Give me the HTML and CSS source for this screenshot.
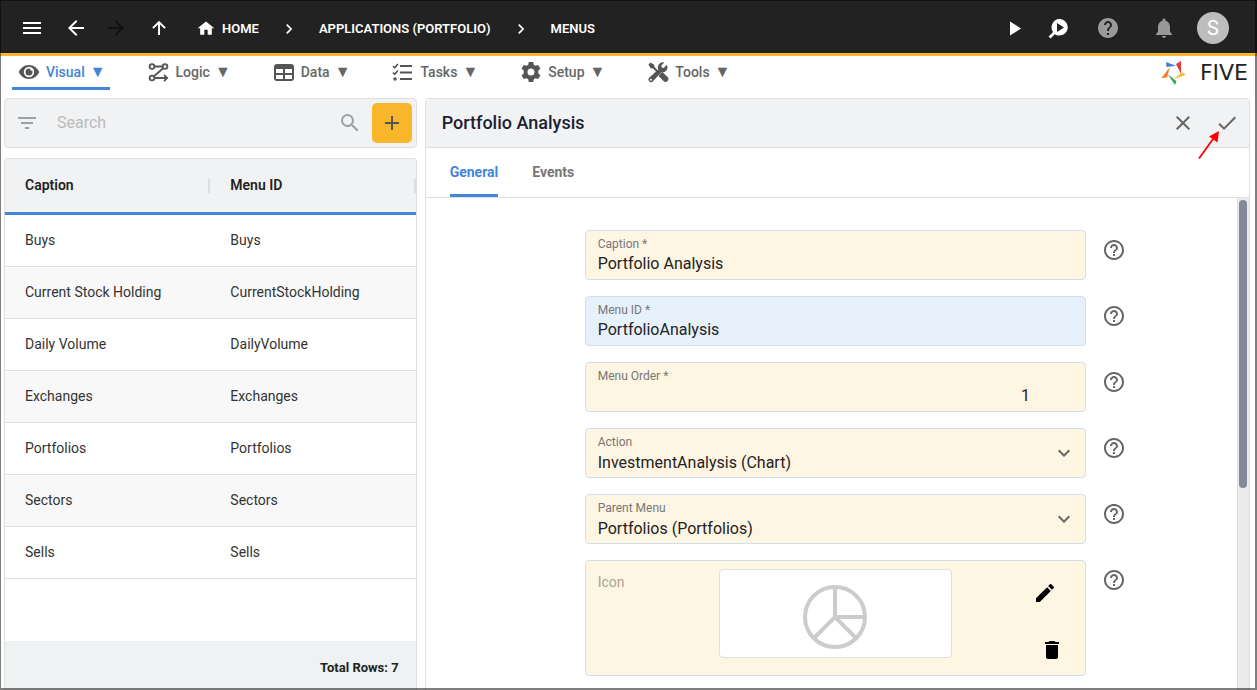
FILE: index.html
```html
<!DOCTYPE html>
<html lang="en">
<head>
<meta charset="utf-8">
<meta name="viewport" content="width=device-width, initial-scale=1">
<title>Five - Menus</title>
<link rel="stylesheet" href="styles.css">
</head>
<body>
<svg class="defs" aria-hidden="true">
  <symbol id="help" viewBox="0 0 24 24"><path d="M11 18h2v-2h-2v2zm1-16C6.48 2 2 6.48 2 12s4.480 10 10 10 10-4.480 10-10S17.520 2 12 2zm0 18c-4.410 0-8-3.590-8-8s3.590-8 8-8 8 3.590 8 8-3.590 8-8 8zm0-14c-2.210 0-4 1.790-4 4h2c0-1.100.9-2 2-2s2 .9 2 2c0 2-3 1.750-3 5h2c0-2.250 3-2.500 3-5 0-2.210-1.790-4-4-4z"/></symbol>
  <symbol id="chevron" viewBox="0 0 24 24"><path d="M10 6 8.590 7.410 13.170 12l-4.580 4.590L10 18l6-6z"/></symbol>
  <symbol id="expand" viewBox="0 0 24 24"><path d="M16.590 8.590 12 13.170 7.410 8.590 6 10l6 6 6-6z"/></symbol>
</svg>
<div class="app">
  <header class="topbar">
    <button class="icon-btn menu" aria-label="Menu"><svg viewBox="0 0 24 24"><path d="M3 18h18v-2H3zm0-5h18v-2H3zm0-7v2h18V6z"/></svg></button>
    <button class="icon-btn" aria-label="Back"><svg viewBox="0 0 24 24"><path d="M20 11H7.830l5.590-5.590L12 4l-8 8 8 8 1.410-1.410L7.830 13H20z"/></svg></button>
    <button class="icon-btn dim" aria-label="Forward" disabled><svg viewBox="0 0 24 24"><path d="m12 4-1.410 1.410L16.170 11H4v2h12.170l-5.580 5.590L12 20l8-8z"/></svg></button>
    <button class="icon-btn up" aria-label="Up"><svg viewBox="0 0 24 24"><path d="M11 19V8.400l-4.400 4.400L5.200 11.400 12 4.700l6.800 6.700-1.400 1.400L13 8.400V19z"/></svg></button>
    <nav class="crumbs" aria-label="Breadcrumb">
      <a class="crumb home" href="#"><svg viewBox="0 0 24 24"><path d="M10 19v-6h4v6h5v-8h3L12 3 2 11h3v8z"/></svg>HOME</a>
      <svg class="sep" aria-hidden="true"><use href="#chevron"/></svg>
      <a class="crumb" href="#">APPLICATIONS (PORTFOLIO)</a>
      <svg class="sep" aria-hidden="true"><use href="#chevron"/></svg>
      <a class="crumb" href="#">MENUS</a>
    </nav>
    <div class="tools">
      <button class="icon-btn" aria-label="Run"><svg viewBox="0 0 24 24"><path d="M8 5.500v14L19 12.500z"/></svg></button>
      <button class="icon-btn" aria-label="Inspect"><svg viewBox="0 0 24 24"><path fill-rule="evenodd" d="M13.500 3a8.300 8.300 0 1 1-4.700 15.200L4.500 22.500 2.600 20.600l4.500-4.500A8.300 8.300 0 0 1 13.500 3zM11 7v9l7-4.500z"/></svg></button>
      <button class="icon-btn soft ask" aria-label="Help"><svg viewBox="0 0 24 24"><path d="M12 2C6.480 2 2 6.480 2 12s4.480 10 10 10 10-4.480 10-10S17.520 2 12 2zm1 17h-2v-2h2v2zm2.070-7.750-.9.920C13.450 12.900 13 13.500 13 15h-2v-.5c0-1.100.450-2.100 1.170-2.830l1.240-1.260c.370-.360.590-.860.590-1.410 0-1.100-.9-2-2-2s-2 .9-2 2H8c0-2.210 1.790-4 4-4s4 1.790 4 4c0 .88-.360 1.680-.93 2.250z"/></svg></button>
      <button class="icon-btn soft bell" aria-label="Notifications"><svg viewBox="0 0 24 24"><path d="M12 22c1.100 0 2-.9 2-2h-4c0 1.100.9 2 2 2zm6-6v-5c0-3.070-1.630-5.640-4.500-6.320V4c0-.83-.67-1.500-1.500-1.500s-1.500.67-1.500 1.500v.68C7.640 5.360 6 7.920 6 11v5l-2 2v1h16v-1z"/></svg></button>
      <button class="avatar" aria-label="Account">S</button>
    </div>
  </header>

  <nav class="modules" aria-label="Modules">
    <button class="module active"><svg viewBox="0 0 24 24"><path fill-rule="evenodd" d="M12 5C7.500 5 3.500 7.800 1.800 12c1.700 4.200 5.700 7 10.200 7s8.500-2.800 10.200-7C20.500 7.800 16.500 5 12 5zm0 1.800a5.200 5.200 0 1 1 0 10.400 5.200 5.200 0 0 1 0-10.400zm0 1.700a3.500 3.500 0 1 0 3.500 3.500c0-.5-.1-1-.3-1.400a1.600 1.600 0 0 1-2-2A3.500 3.500 0 0 0 12 8.500z"/></svg>Visual <span>▼</span></button>
    <button class="module"><svg viewBox="0 0 24 24" fill="none" stroke="currentColor" stroke-width="1.800"><circle cx="5" cy="6.500" r="2.400"/><circle cx="18" cy="6.500" r="2.400"/><circle cx="5" cy="18" r="2.400"/><path d="M7.500 6.500h8M16.200 8.300 6.900 16.300M7.500 18h12M17 14.800l3.200 3.200-3.200 3.200"/></svg>Logic <span>▼</span></button>
    <button class="module"><svg viewBox="0 0 24 24"><path fill-rule="evenodd" d="M5 4h14q3 0 3 3v11q0 3-3 3H5q-3 0-3-3V7q0-3 3-3zm-1 5v4h7V9zm9 0v4h7V9zm-9 6v4h7v-4zm9 0v4h7v-4z"/></svg>Data <span>▼</span></button>
    <button class="module"><svg viewBox="0 0 24 24" fill="none" stroke="currentColor" stroke-width="2"><path d="M9 6h12M9 12.500h12M9 19h12"/><path stroke-width="1.600" d="m2 6 1.700 1.700 3.200-3.800M2 12.500l1.700 1.700 3.200-3.800"/><circle cx="4" cy="19" r=".8"/></svg>Tasks <span>▼</span></button>
    <button class="module"><svg viewBox="0 0 24 24"><path fill-rule="evenodd" d="M9.800 2h4.400l.6 2.800 1.700 1 2.700-.9 2.200 3.800-2.100 1.900v2.800l2.100 1.900-2.200 3.800-2.700-.9-1.700 1-.6 2.800H9.800l-.6-2.800-1.700-1-2.700.9-2.200-3.800 2.100-1.900v-2.800L2.600 8.700l2.200-3.800 2.700.9 1.700-1zM12 8.500a3.500 3.500 0 1 0 0 7 3.500 3.500 0 0 0 0-7z"/></svg>Setup <span>▼</span></button>
    <button class="module"><svg viewBox="0 0 24 24"><path d="m2.500 4.500 2-2 3.600 2.200.4 2.400 4.200 4.200-1.500 1.500L7 8.600l-2.400-.4z"/><path d="m14.700 13.200 2-1 4.800 4.900a2.800 2.800 0 0 1-4 4l-4.900-5z"/><path fill-rule="evenodd" d="M20.800 4.800 17.700 8l-2-.4-.4-2 3-3.200a5.200 5.200 0 0 0-6 7.200l-9.100 8.200a2.500 2.500 0 1 0 3.500 3.600l8.500-9a5.200 5.200 0 0 0 5.600-7.600zM5 18.700a1 1 0 1 1 0 2 1 1 0 0 1 0-2z"/></svg>Tools <span>▼</span></button>
    <div class="brand">
      <svg viewBox="0 0 25 24" aria-hidden="true"><path fill="#3f7fd6" d="M5 1l10 3.800L5.500 6z"/><path fill="#e23b3b" d="M20 0v13l-5-10z"/><path fill="#f9b92b" d="M20.500 11.500l4.500 2.300L13 18z"/><path fill="#36a853" d="M6.500 13l9 7.200L14 24z"/><path fill="#f58025" d="M9 6L6 16.500.3 17z"/></svg>
      <span>FIVE</span>
    </div>
  </nav>

  <main class="workspace">
    <section class="side">
      <div class="search">
        <button class="icon-btn tint" aria-label="Filter"><svg viewBox="0 0 24 24"><path d="M10 18h4v-2h-4zM3 6v2h18V6zm3 7h12v-2H6z"/></svg></button>
        <input type="search" aria-label="Search" placeholder="Search">
        <button class="icon-btn tint" aria-label="Search records"><svg viewBox="0 0 24 24"><path d="M15.500 14h-.79l-.28-.27A6.470 6.470 0 0 0 16 9.500 6.500 6.500 0 1 0 9.500 16c1.610 0 3.090-.59 4.230-1.570l.27.28v.79l5 4.990L20.490 19zm-6 0a4.500 4.500 0 1 1 0-9 4.500 4.500 0 0 1 0 9z"/></svg></button>
        <button class="add" aria-label="Add"><svg viewBox="0 0 24 24"><path d="M19 13h-6v6h-2v-6H5v-2h6V5h2v6h6z"/></svg></button>
      </div>
      <div class="list">
        <table>
          <thead><tr><th>Caption</th><th>Menu ID</th></tr></thead>
          <tbody>
            <tr><td>Buys</td><td>Buys</td></tr>
            <tr><td>Current Stock Holding</td><td>CurrentStockHolding</td></tr>
            <tr><td>Daily Volume</td><td>DailyVolume</td></tr>
            <tr><td>Exchanges</td><td>Exchanges</td></tr>
            <tr><td>Portfolios</td><td>Portfolios</td></tr>
            <tr><td>Sectors</td><td>Sectors</td></tr>
            <tr><td>Sells</td><td>Sells</td></tr>
          </tbody>
        </table>
        <div class="total">Total Rows: 7</div>
      </div>
    </section>

    <section class="detail">
      <div class="detail-head">
        <h1>Portfolio Analysis</h1>
        <button class="icon-btn" aria-label="Cancel"><svg viewBox="0 0 24 24"><path d="M19 6.410 17.590 5 12 10.590 6.410 5 5 6.410 10.590 12 5 17.590 6.410 19 12 13.410 17.590 19 19 17.590 13.410 12z"/></svg></button>
        <button class="icon-btn" aria-label="Save"><svg viewBox="0 0 24 24"><path d="M9 16.200 4.800 12l-1.400 1.400L9 19 21 7l-1.400-1.400z"/></svg></button>
        <svg class="pointer" viewBox="0 0 22 30" aria-hidden="true"><path d="M1 28.500 15 9" stroke="#f00" stroke-width="1.800"/><path fill="#f00" d="M21 1 19.500 12.500 11 6.500z"/></svg>
      </div>
      <div class="tabs" role="tablist">
        <button class="tab active" role="tab" aria-selected="true">General</button>
        <button class="tab" role="tab" aria-selected="false">Events</button>
      </div>
      <div class="body">
        <form class="form">
          <div class="row">
            <div class="field"><label for="caption">Caption *</label><input id="caption" type="text" value="Portfolio Analysis"></div>
            <button type="button" class="icon-btn hint" aria-label="About Caption"><svg><use href="#help"/></svg></button>
          </div>
          <div class="row">
            <div class="field focus"><label for="menu-id">Menu ID *</label><input id="menu-id" type="text" value="PortfolioAnalysis"></div>
            <button type="button" class="icon-btn hint" aria-label="About Menu ID"><svg><use href="#help"/></svg></button>
          </div>
          <div class="row">
            <div class="field"><label for="order">Menu Order *</label><input id="order" class="number" type="text" inputmode="numeric" value="1"></div>
            <button type="button" class="icon-btn hint" aria-label="About Menu Order"><svg><use href="#help"/></svg></button>
          </div>
          <div class="row">
            <div class="field"><label for="action">Action</label><select id="action"><option>InvestmentAnalysis (Chart)</option></select><svg class="arrow" aria-hidden="true"><use href="#expand"/></svg></div>
            <button type="button" class="icon-btn hint" aria-label="About Action"><svg><use href="#help"/></svg></button>
          </div>
          <div class="row">
            <div class="field"><label for="parent">Parent Menu</label><select id="parent"><option>Portfolios (Portfolios)</option></select><svg class="arrow" aria-hidden="true"><use href="#expand"/></svg></div>
            <button type="button" class="icon-btn hint" aria-label="About Parent Menu"><svg><use href="#help"/></svg></button>
          </div>
          <div class="row">
            <div class="field picture">
              <span class="caption">Icon</span>
              <div class="preview"><svg viewBox="0 0 64 64" fill="none" stroke="#ccc" stroke-width="4"><circle cx="32" cy="32" r="30"/><path d="M32 2v30h30M11 53l21-21 21 21"/></svg></div>
              <div class="actions">
                <button type="button" class="icon-btn edit" aria-label="Edit icon"><svg viewBox="0 0 24 24"><path d="M3 17.250V21h3.750L17.810 9.940l-3.750-3.750zM20.710 7.040a1 1 0 0 0 0-1.410l-2.340-2.340a1 1 0 0 0-1.410 0l-1.830 1.830 3.750 3.750z"/></svg></button>
                <button type="button" class="icon-btn" aria-label="Delete icon"><svg viewBox="0 0 24 24"><path d="M6 19c0 1.100.9 2 2 2h8c1.100 0 2-.9 2-2V7H6zM19 4h-3.500l-1-1h-5l-1 1H5v2h14z"/></svg></button>
              </div>
            </div>
            <button type="button" class="icon-btn hint" aria-label="About Icon"><svg><use href="#help"/></svg></button>
          </div>
        </form>
        <div class="scroll"><div class="thumb"></div></div>
      </div>
    </section>
  </main>
</div>
</body>
</html>
```
FILE: styles.css
```css
* { box-sizing: border-box; }
body {
  margin: 0;
  font: 14px/20px Roboto, "Liberation Sans", sans-serif;
  color: #333;
  background: #fff;
}
button, input, select { font: inherit; color: inherit; border: 0; margin: 0; padding: 0; background: none; outline: 0; }
svg { display: block; flex: none; }
svg:not([fill]) { fill: currentColor; }
.defs { position: absolute; width: 0; height: 0; }

.app { display: flex; flex-direction: column; height: 100vh; overflow: hidden; }
.app::after {
  content: "";
  position: fixed;
  inset: 0;
  border: solid rgba(0, 0, 0, .5);
  border-width: 1px 2px 2px 1px;
  pointer-events: none;
}
.icon-btn { display: flex; width: 24px; height: 24px; flex: none; }
.icon-btn svg { width: 24px; height: 24px; }

.topbar {
  display: flex;
  align-items: center;
  gap: 16px;
  height: 56px;
  flex: none;
  padding: 0 28px 0 20px;
  background: #222;
  border-bottom: 3px solid #f8b62b;
  color: #fff;
}
.topbar > .icon-btn { margin-top: 3px; }
.topbar .menu { margin-right: 4px; }
.topbar .dim { color: #111; }
.topbar .up { margin-left: 3px; }
.crumbs { display: flex; align-items: center; margin: 4px 0 0 9px; font-size: 13px; font-weight: 600; }
.crumb { display: flex; align-items: center; gap: 6px; color: #fff; text-decoration: none; }
.crumb svg { width: 20px; height: 20px; }
.sep { width: 20px; height: 20px; margin: 0 20px; }
.tools { display: flex; align-items: center; gap: 20px; margin: 3px 0 0 auto; }
.soft { color: #999; }
.tools .ask { margin-left: 6px; }
.tools .bell { margin-left: 12px; margin-right: 1px; }
.avatar { width: 32px; height: 32px; border-radius: 50%; background: #bdbdbd; font-size: 20px; }

.modules { display: flex; align-items: flex-start; gap: 32px; height: 42px; flex: none; padding: 0 9px 0 12px; color: #555; }
.module { display: flex; align-items: center; gap: 5px; height: 34px; padding: 0 4px 0 5px; border-bottom: 3px solid transparent; font-weight: 500; color: #666; }
.module span { font-size: 16px; }
.module svg { width: 24px; height: 24px; color: #555; }
.module.active { color: #4285db; border-color: #4285db; }
.brand { display: flex; align-items: center; gap: 14px; height: 34px; margin-left: auto; font: 22px/24px "DejaVu Sans", sans-serif; color: #222; }
.brand svg { width: 25px; height: 24px; }

.workspace { display: grid; grid-template-columns: minmax(0, 1fr) minmax(0, 2fr); gap: 8px; flex: 1; min-height: 0; padding: 0 7px 0 4px; }
.side { display: flex; flex-direction: column; gap: 10px; min-height: 0; }
.search { display: flex; align-items: center; height: 50px; padding: 0 4px 0 10px; background: #f1f2f4; border: 1px solid #dedfe1; border-radius: 4px; }
.search input { flex: 1; min-width: 0; height: 32px; padding: 0 0 2px 18px; font-size: 16px; }
.search input::placeholder { color: #bbb; }
.tint { color: #9aa0a6; }
.add { display: grid; place-items: center; width: 40px; height: 40px; margin-left: 10px; border-radius: 5px; background: #f8b62b; color: #555; }
.add svg { width: 24px; height: 24px; }

.list { display: flex; flex-direction: column; flex: 1; min-height: 0; border: 1px solid #dedfe1; border-bottom: 0; border-radius: 4px 4px 0 0; overflow: hidden; }
table { width: 100%; table-layout: fixed; border-collapse: separate; border-spacing: 0; }
th, td { padding: 0 20px 2px; text-align: left; height: 52px; border-bottom: 1px solid #dedfe1; }
th { height: 56px; font-weight: 600; color: #222; background: linear-gradient(#dcdee0, #dcdee0) right center / 2px 14px no-repeat #f1f2f4; border-bottom: 3px solid #4285db; }
tbody tr:nth-child(even) { background: #f8f8f9; }
.total { margin-top: auto; padding: 17px 17px 12px; background: #eef2f3; text-align: right; font-size: 13px; font-weight: 700; color: #222; }

.detail { display: flex; flex-direction: column; min-height: 0; border: 1px solid #dedfe1; border-bottom: 0; border-radius: 4px 4px 0 0; }
.detail-head { position: relative; display: flex; align-items: center; gap: 20px; height: 49px; flex: none; padding: 0 10px 0 16px; background: #f1f2f4; border-bottom: 1px solid #dedfe1; color: #666; }
h1 { flex: 1; margin: 0; font-size: 18px; font-weight: 500; color: #1b2130; }
.pointer { position: absolute; right: 29px; top: 31px; width: 22px; height: 30px; z-index: 1; }
.tabs { display: flex; gap: 34px; height: 50px; flex: none; padding: 0 24px; border-bottom: 1px solid #dedfe1; }
.tab { padding-top: 2px; border-bottom: 3px solid transparent; font-weight: 700; color: #777; }
.tab.active { color: #4285db; border-color: #4285db; }
.body { display: flex; flex: 1; min-height: 0; }
.form { flex: 1; display: flex; flex-direction: column; gap: 16px; padding-top: 32px; overflow: hidden; }
.row { display: grid; grid-template-columns: minmax(0, 159fr) minmax(0, 501fr) minmax(0, 151fr); flex: none; }
.hint { margin: 8px 0 0 16px; color: #666; }
.field { grid-column: 2; position: relative; display: flex; flex-direction: column; padding: 5px 12px; background: #fff5e3; border: 1px solid #cfdfee; border-radius: 4px; color: #222; }
.field.focus { background: #e7f1fc; }
.field label { font-size: 12px; line-height: 16px; color: #777; }
.field input, .field select { width: 100%; height: 22px; font-size: 16px; appearance: none; }
.field select { padding-top: 3px; }
.field .number { text-align: right; padding-right: 43px; }
.arrow { position: absolute; right: 9px; top: 12px; width: 24px; height: 24px; color: #666; pointer-events: none; }
.field.picture { display: grid; grid-template-columns: 4fr 7fr 4fr; grid-template-rows: minmax(0, 1fr); height: 116px; padding: 8px 0 17px; }
.caption { padding: 3px 12px; color: #aaa192; }
.preview { display: grid; place-items: center; padding-top: 6px; background: #fff; border: 1px solid #dedfe1; border-radius: 4px; }
.preview svg { width: 64px; height: 64px; }
.actions { display: flex; flex-direction: column; align-items: flex-end; gap: 33px; padding: 12px 21px 0 0; color: #000; }
.edit { width: 31px; }

.scroll { width: 12px; flex: none; padding: 2px 1px; background: #ebebeb; border-left: 1px solid #dedfe1; }
.thumb { width: 8px; height: 59%; border-radius: 4px; background: #838998; }
```
